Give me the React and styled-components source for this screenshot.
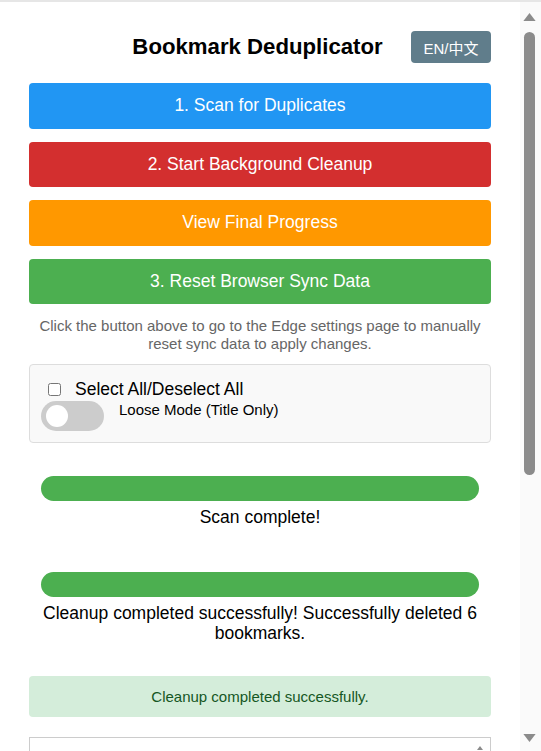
import React from 'react';
import styled, { createGlobalStyle } from 'styled-components';

const GlobalStyle = createGlobalStyle`
  html, body {
    margin: 0;
    padding: 0;
    background: #fff;
    overflow: hidden;
  }
  body {
    border-top: 2px solid #e6e6e6;
    font-family: "Liberation Sans", Arial, "Noto Sans CJK SC", sans-serif;
  }
`;

const Page = styled.div`
  display: flex;
  height: calc(100vh - 2px);
`;

const Content = styled.div`
  flex: 1;
  min-width: 0;
  overflow: hidden;
`;

const Container = styled.div`
  padding: 29px 29px 230px;
  color: #000;
`;

// window scrollbar (the headless browser hides native ones)
const Rail = styled.div`
  flex: none;
  display: flex;
  flex-direction: column;
  align-items: flex-start;
  width: 21px;
  background: #fafafa;
`;

const RailArrow = styled.div`
  display: flex;
  align-items: ${(p) => (p.$down ? 'flex-end' : 'flex-start')};
  height: 30px;
  padding: ${(p) => (p.$down ? '0 0 9px 3px' : '11px 0 0 3px')};
  box-sizing: border-box;
  color: #8b8b8b;
`;

const Thumb = styled.div`
  width: 11px;
  height: 443px;
  margin-left: 4px;
  border-radius: 6px;
  background: #8b8b8b;
`;

const RailSpacer = styled.div`
  flex: 1;
`;

const Triangle = ({ down, size = 13 }) => (
  <svg width={size} height={Math.round(size * 0.65)} viewBox="0 0 13 8.5" fill="currentColor">
    {down ? <polygon points="0,0 13,0 6.5,8.5" /> : <polygon points="6.5,0 13,8.5 0,8.5" />}
  </svg>
);

const Header = styled.div`
  display: grid;
  grid-template-columns: 1fr auto 1fr;
  align-items: center;
  height: 32px;
  margin-bottom: 20px;
`;

const Title = styled.h1`
  grid-column: 2;
  margin: 0 0 0 -5px;
  font-size: 22.2px;
  font-weight: bold;
  white-space: nowrap;
`;

const LangButton = styled.button`
  grid-column: 3;
  justify-self: end;
  width: 80px;
  height: 32px;
  border: none;
  border-radius: 4px;
  background: #607d8b;
  color: #fff;
  font-family: inherit;
  font-size: 15px;
`;

const ActionButton = styled.button`
  display: block;
  width: 100%;
  height: 45.5px;
  margin-bottom: 13px;
  border: none;
  border-radius: 4px;
  background: ${(p) => p.$color};
  color: #fff;
  font-family: inherit;
  font-size: 17.5px;
  cursor: pointer;
`;

const Note = styled.p`
  margin: 0 8px;
  text-align: center;
  font-size: 15px;
  line-height: 17.5px;
  color: #666;
`;

const OptionsBox = styled.div`
  margin-top: 12px;
  padding: 14px 12px 11px 11px;
  border: 1px solid #ddd;
  border-radius: 4px;
  background: #f9f9f9;
`;

const CheckRow = styled.label`
  display: flex;
  align-items: center;
  font-size: 17.5px;
  line-height: 20px;
`;

const CheckBox = styled.input.attrs({ type: 'checkbox' })`
  width: 13px;
  height: 13px;
  margin: 0 14px 0 7px;
`;

const ToggleRow = styled.div`
  display: flex;
  align-items: flex-start;
  margin-top: 2px;
`;

const Toggle = styled.span`
  position: relative;
  flex: none;
  width: 63px;
  height: 30px;
  border-radius: 15px;
  background: #ccc;

  &::before {
    content: '';
    position: absolute;
    left: 5px;
    top: 4px;
    width: 22px;
    height: 22px;
    border-radius: 50%;
    background: #fff;
  }
`;

const ToggleLabel = styled.span`
  margin-left: 15px;
  font-size: 15px;
  line-height: 18px;
`;

const Progress = styled.div`
  margin: ${(p) => p.$top}px 12px 0;
`;

const Bar = styled.div`
  height: 25px;
  border-radius: 13px;
  background: #4caf50;
`;

const ProgressText = styled.div`
  margin-top: 6px;
  text-align: center;
  font-size: 17.5px;
  line-height: 20px;
`;

const Alert = styled.div`
  margin-top: 33px;
  padding: 10.5px;
  border-radius: 4px;
  background: #d4edda;
  color: #155724;
  text-align: center;
  font-size: 15px;
  line-height: 20px;
`;

const LogWrap = styled.div`
  position: relative;
  margin-top: 20px;
`;

const Log = styled.textarea`
  display: block;
  box-sizing: border-box;
  width: 100%;
  height: 200px;
  border: 1px solid #ccc;
  border-radius: 0;
  resize: none;
  font-family: inherit;
`;

const LogScrollUp = styled.div`
  position: absolute;
  top: 8px;
  right: 8px;
  color: #8b8b8b;
  line-height: 0;
`;

const App = () => {
  return (
    <>
      <GlobalStyle />
      <Page>
        <Content>
          <Container>
            <Header>
              <Title>Bookmark Deduplicator</Title>
              <LangButton>EN/中文</LangButton>
            </Header>

            <ActionButton $color="#2196f3">1. Scan for Duplicates</ActionButton>
            <ActionButton $color="#d32f2f">2. Start Background Cleanup</ActionButton>
            <ActionButton $color="#ff9800">View Final Progress</ActionButton>
            <ActionButton $color="#4caf50">3. Reset Browser Sync Data</ActionButton>

            <Note>
              Click the button above to go to the Edge settings page to manually reset sync data to apply changes.
            </Note>

            <OptionsBox>
              <CheckRow>
                <CheckBox />
                Select All/Deselect All
              </CheckRow>
              <ToggleRow>
                <Toggle />
                <ToggleLabel>Loose Mode (Title Only)</ToggleLabel>
              </ToggleRow>
            </OptionsBox>

            <Progress $top={33}>
              <Bar />
              <ProgressText>Scan complete!</ProgressText>
            </Progress>

            <Progress $top={45}>
              <Bar />
              <ProgressText>Cleanup completed successfully! Successfully deleted 6 bookmarks.</ProgressText>
            </Progress>

            <Alert>Cleanup completed successfully.</Alert>

            <LogWrap>
              <Log readOnly defaultValue="" />
              <LogScrollUp>
                <Triangle size={6} />
              </LogScrollUp>
            </LogWrap>
          </Container>
        </Content>

        <Rail>
          <RailArrow>
            <Triangle />
          </RailArrow>
          <Thumb />
          <RailSpacer />
          <RailArrow $down>
            <Triangle down />
          </RailArrow>
        </Rail>
      </Page>
    </>
  );
};

export default App;
